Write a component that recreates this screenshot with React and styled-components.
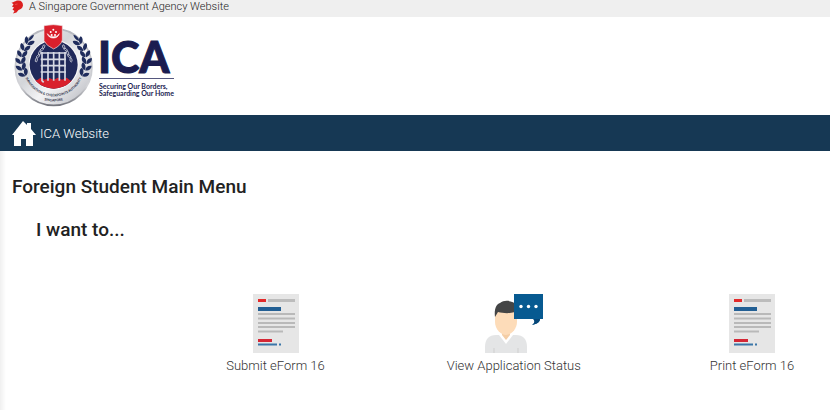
import React from 'react';
import styled, { createGlobalStyle } from 'styled-components';

const GlobalStyle = createGlobalStyle`
  * {
    box-sizing: border-box;
  }

  body {
    margin: 0;
    background: #fff;
    color: #222;
    font-family: Roboto, 'Liberation Sans', sans-serif;
  }
`;

const AgencyBar = styled.div`
  display: flex;
  align-items: center;
  height: 17px;
  padding: 0 10px 3px;
  background: #efefef;
`;

const AgencyLink = styled.a`
  display: flex;
  align-items: center;
  gap: 5px;
  line-height: 14px;
  font-size: 11px;
  font-weight: 300;
  color: #222;
  text-decoration: none;
`;

const Header = styled.header`
  display: flex;
  padding: 3px 8px 5px;
`;

const LogoLink = styled.a`
  display: flex;
  align-items: flex-start;
  color: #1a1c50;
  font-family: Lato, sans-serif;
  text-decoration: none;
`;

const LogoText = styled.span`
  display: flex;
  flex-direction: column;
  padding-top: 18px;
`;

const LogoName = styled.span`
  line-height: 38px;
  font-size: 43px;
  font-weight: 900;
  -webkit-text-stroke: 1px #1a1c50;
`;

const Tagline = styled.span`
  padding-top: 4px;
  border-top: 1px solid #55577e;
  margin: 2px 0 0 1px;
  line-height: 7px;
  font-size: 7px;
  font-weight: 700;
`;

const Nav = styled.nav`
  display: flex;
  align-items: center;
  height: 36px;
  padding: 0 12px;
  background: #163854;
`;

const NavLink = styled.a`
  display: flex;
  align-items: center;
  gap: 4px;
  font-size: 13px;
  font-weight: 300;
  color: #fff;
  text-decoration: none;
`;

const Main = styled.main`
  min-height: calc(100vh - 151px);
  padding: 24px 0;
  background: linear-gradient(to right, #f0f0f0, #fff 6px);
`;

const Title = styled.h1`
  margin: 0 12px;
  line-height: 24px;
  font-size: 19px;
  font-weight: 500;
`;

const Subtitle = styled.h2`
  margin: 19px 36px 0;
  line-height: 24px;
  font-size: 19px;
  font-weight: 500;
`;

const Menu = styled.ul`
  display: flex;
  justify-content: space-between;
  margin: 52px 0 0;
  padding: 0 10px 0 25%;
  list-style: none;
`;

const MenuItem = styled.li`
  width: 136px;
`;

const MenuLink = styled.a`
  display: flex;
  flex-direction: column;
  align-items: center;
  gap: 4px;
  line-height: 18px;
  font-size: 13px;
  font-weight: 300;
  color: #333;
  white-space: nowrap;
  text-decoration: none;
`;

const LionIcon = () => (
  <svg width="14" height="14" viewBox="0 0 28 28" aria-hidden="true">
    <path
      d="M3 5 C8 5 10 1 17 1 C23 1 26 5 26 11 C25 17 20 19 17 20 L13 25 L6 27 L9 22 L5 19 L8 15 L4 13 L7 9 Z"
      fill="#dc1f1f"
    />
    <path d="M10 9 L15 8" fill="none" stroke="#ef7a72" strokeWidth="1" />
  </svg>
);

const HomeIcon = () => (
  <svg width="24" height="25" viewBox="0 0 24 25" aria-hidden="true">
    <path d="M11 0 L15 4 V2 H19 V8 L24 14 H21 V25 H14 V18 H9 V25 H2 V14 H0 Z" fill="#fff" />
  </svg>
);

const leaves = [
  [55, 62, 34],
  [43, 80, 20],
  [35, 99, 6],
  [31, 119, -8],
  [33, 139, -20],
  [40, 157, -34],
];

const Laurel = () => (
  <g fill="#1f2c5c">
    {leaves.map(([x, y, angle]) => (
      <g key={y} transform={`translate(${x + 7} ${y + 3}) rotate(${angle})`}>
        <path d="M-1 10 C-14 6 -17 -3 -14 -10 C-4 -8 2 0 -1 10 Z" />
        <path d="M1 10 C-1 -1 5 -9 14 -11 C18 -2 13 7 1 10 Z" />
      </g>
    ))}
    <path d="M78 44 C68 46 62 53 60 63 C70 60 76 54 78 44 Z" />
  </g>
);

const Chain = () => (
  <g fill="none" stroke="#c9cbd6" strokeWidth="2.5">
    <ellipse cx="107" cy="80" rx="3" ry="6" transform="rotate(20 107 80)" />
    <ellipse cx="101" cy="89" rx="3" ry="6" transform="rotate(50 101 89)" />
    <ellipse cx="95" cy="99" rx="3" ry="6" transform="rotate(15 95 99)" />
    <ellipse cx="90" cy="109" rx="3" ry="6" transform="rotate(45 90 109)" />
    <ellipse cx="85" cy="120" rx="3" ry="6" transform="rotate(10 85 120)" />
  </g>
);

const Emblem = () => (
  <svg width="90" height="90" viewBox="0 0 270 270" role="img" aria-label="ICA crest">
    <defs>
      <linearGradient id="silver" x1="0" y1="0" x2="1" y2="1">
        <stop offset="0" stopColor="#f7f7f8" />
        <stop offset="0.4" stopColor="#d3d5d9" />
        <stop offset="0.6" stopColor="#f3f3f5" />
        <stop offset="1" stopColor="#b1b3ba" />
      </linearGradient>
      <linearGradient id="rim" x1="0" y1="0" x2="0" y2="1">
        <stop offset="0" stopColor="#b5b7be" />
        <stop offset="0.75" stopColor="#d3d4d8" />
        <stop offset="1" stopColor="#74767e" />
      </linearGradient>
      <clipPath id="field">
        <circle cx="137" cy="134" r="72" />
      </clipPath>
      <path id="motto" d="M49 164 A92 92 0 0 0 225 164" />
      <path id="country" d="M91 234 A108 108 0 0 0 183 234" />
    </defs>
    <circle cx="137" cy="141" r="115" fill="url(#silver)" stroke="url(#rim)" strokeWidth="5" />
    <Laurel />
    <g transform="translate(274 0) scale(-1 1)">
      <Laurel />
    </g>
    <circle cx="137" cy="134" r="75" fill="#fafafa" />
    <g clipPath="url(#field)">
      <rect x="60" y="60" width="160" height="150" fill="#20295a" />
      <path
        d="M60 188 L75 177 L87 181 L98 173 L110 179 L122 173 L137 179 L150 173 L162 179 L176 173 L188 182 L200 177 L215 190 V215 H60 Z"
        fill="#d9202c"
      />
    </g>
    <Chain />
    <g transform="translate(274 0) scale(-1 1)">
      <Chain />
    </g>
    <path
      d="M98 99 H174 M98 118 H174 M98 137 H174 M98 156 H174 M102 96 V182 L107 187 M120 96 V182 M137 96 V182 M154 96 V182 M171 96 V182"
      fill="none"
      stroke="#d6d9e4"
      strokeWidth="5"
    />
    <path
      d="M108 17 Q137 11 163 17 V60 Q160 76 137 87 Q114 77 108 62 Z"
      fill="#d9202c"
      stroke="#ece1e3"
      strokeWidth="2"
    />
    <path d="M118 41 A19 19 0 0 0 154 41 A20 17 0 0 1 118 41 Z" fill="#fff" stroke="#fff" strokeWidth="2" />
    <g fill="#fff">
      <circle cx="136" cy="29" r="3" />
      <circle cx="128" cy="36" r="3" />
      <circle cx="144" cy="36" r="3" />
      <circle cx="131" cy="45" r="3" />
      <circle cx="141" cy="45" r="3" />
    </g>
    <text fill="#343950" fontFamily="Lato, sans-serif" fontWeight="900" fontSize="10" textAnchor="middle">
      <textPath href="#motto" startOffset="50%">
        IMMIGRATION &amp; CHECKPOINTS AUTHORITY
      </textPath>
      <textPath href="#country" startOffset="50%">
        SINGAPORE
      </textPath>
    </text>
  </svg>
);

const FormIcon = () => (
  <svg width="46" height="59" viewBox="0 0 46 59" aria-hidden="true">
    <rect width="46" height="59" fill="#e6e6e6" />
    <rect x="5" y="5" width="8" height="3" fill="#e32a2a" />
    <rect x="15" y="5" width="27" height="3" fill="#bcbcbc" />
    <rect x="5" y="13" width="23" height="4" fill="#225f94" />
    <path d="M5 20 H42 M5 24.5 H42 M5 29 H42 M5 33 H42 M5 37.5 H30" stroke="#b9b9b9" strokeWidth="2" />
    <rect x="5" y="45" width="14" height="3" fill="#d42735" />
    <path d="M5 50.5 H24 M26 50.5 H28" stroke="#3b76a8" strokeWidth="2" />
  </svg>
);

const StatusIcon = () => (
  <svg width="58" height="59" viewBox="0 0 58 59" aria-hidden="true">
    <path d="M0 59 V53 C0 45 4 41 11 41 H31 C38 41 42 45 42 53 V59 Z" fill="#e4e5e6" />
    <path d="M14 41 L21 50 L28 41 L25 38 H17 Z" fill="#fff" />
    <path d="M9 54 V59 M33 54 V59" stroke="#cfcfcf" strokeWidth="1" />
    <path d="M17 36 H25 V41 L21 46 L17 41 Z" fill="#f4cda5" />
    <path d="M10 15 H32 V28 C32 35 26 41 21 41 C16 41 10 35 10 28 Z" fill="#fddcb9" />
    <path d="M10 23 C9 16 11 10 15 9 C20 5 28 7 32 11 V23 L30 18 C23 20 18 19 13 18 Z" fill="#444546" />
    <path d="M29 0 H58 V25 H55 C55 28 52 30 47 31 C50 29 50 27 49 25 H29 Z" fill="#075a91" />
    <path d="M48 25 H55 C55 28 52 30 47 31 C50 29 50 27 48 25 Z" fill="#064778" />
    <circle cx="36" cy="12.5" r="1.7" fill="#fff" />
    <circle cx="43.5" cy="12.5" r="1.7" fill="#fff" />
    <circle cx="51" cy="12.5" r="1.7" fill="#fff" />
  </svg>
);

const menuItems = [
  { label: 'Submit eForm 16', Icon: FormIcon },
  { label: 'View Application Status', Icon: StatusIcon },
  { label: 'Print eForm 16', Icon: FormIcon },
];

export default () => (
  <>
    <GlobalStyle />
    <AgencyBar>
      <AgencyLink href="#">
        <LionIcon />
        A Singapore Government Agency Website
      </AgencyLink>
    </AgencyBar>
    <Header>
      <LogoLink href="#">
        <Emblem />
        <LogoText>
          <LogoName>ICA</LogoName>
          <Tagline>
            Securing Our Borders,
            <br />
            Safeguarding Our Home
          </Tagline>
        </LogoText>
      </LogoLink>
    </Header>
    <Nav>
      <NavLink href="#">
        <HomeIcon />
        ICA Website
      </NavLink>
    </Nav>
    <Main>
      <Title>Foreign Student Main Menu</Title>
      <Subtitle>I want to...</Subtitle>
      <Menu>
        {menuItems.map(({ label, Icon }) => (
          <MenuItem key={label}>
            <MenuLink href="#">
              <Icon />
              {label}
            </MenuLink>
          </MenuItem>
        ))}
      </Menu>
    </Main>
  </>
);
